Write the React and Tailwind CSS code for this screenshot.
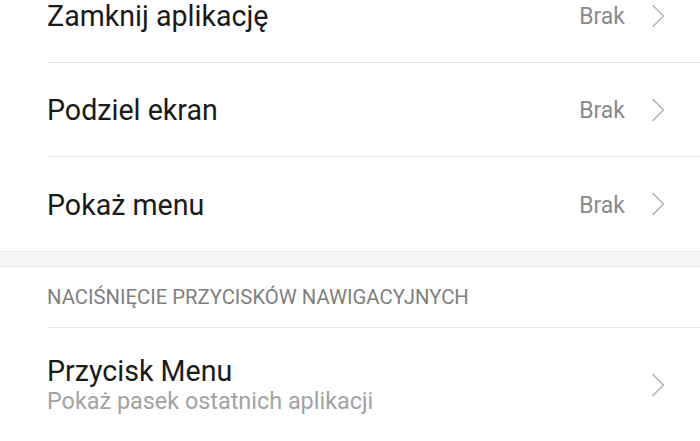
import React from "react";

const font = { fontFamily: "Roboto, 'Noto Sans', sans-serif" };

function Chevron() {
  return (
    <svg width="14" height="24" viewBox="0 0 14 24" fill="none" className="shrink-0">
      <path d="M2 1.5 L12.5 12 L2 22.5" stroke="#b5b5b5" strokeWidth="1.6" strokeLinecap="round" strokeLinejoin="round" />
    </svg>
  );
}

function Row({ title, value, last }) {
  return (
    <div className="pl-[47px]">
      <div className={`h-[94px] flex items-center pr-[35px] ${last ? "" : "border-b border-[#e6e6e6]"}`}>
        <div className="flex-1 text-[28.6px] text-[#1a1a1a] leading-none pt-[2px]">{title}</div>
        <div className="text-[23px] text-[#8a8a8a] mr-[26px] leading-none pt-[2px]">{value}</div>
        <Chevron />
      </div>
    </div>
  );
}

export default function App() {
  return (
    <div className="w-[700px] h-[441px] overflow-hidden bg-white" style={font}>
      <div className="mt-[-31px]">
        <Row title="Zamknij aplikację" value="Brak" />
        <Row title="Podziel ekran" value="Brak" />
        <Row title="Pokaż menu" value="Brak" last />
      </div>
      <div className="h-[16px] bg-[#f5f5f5] border-y border-[#ebebeb]" />
      <div className="pl-[47px]">
        <div className="h-[61px] flex items-center border-b border-[#e6e6e6] text-[20.3px] text-[#7f7f7f] leading-none">
          NACIŚNIĘCIE PRZYCISKÓW NAWIGACYJNYCH
        </div>
        <div className="h-[114px] flex items-center pr-[35px]">
          <div className="flex-1 flex flex-col gap-[5px]">
            <div className="text-[28.6px] text-[#1a1a1a] leading-none">Przycisk Menu</div>
            <div className="text-[23.4px] text-[#a3a3a3] leading-none">Pokaż pasek ostatnich aplikacji</div>
          </div>
          <Chevron />
        </div>
      </div>
    </div>
  );
}
